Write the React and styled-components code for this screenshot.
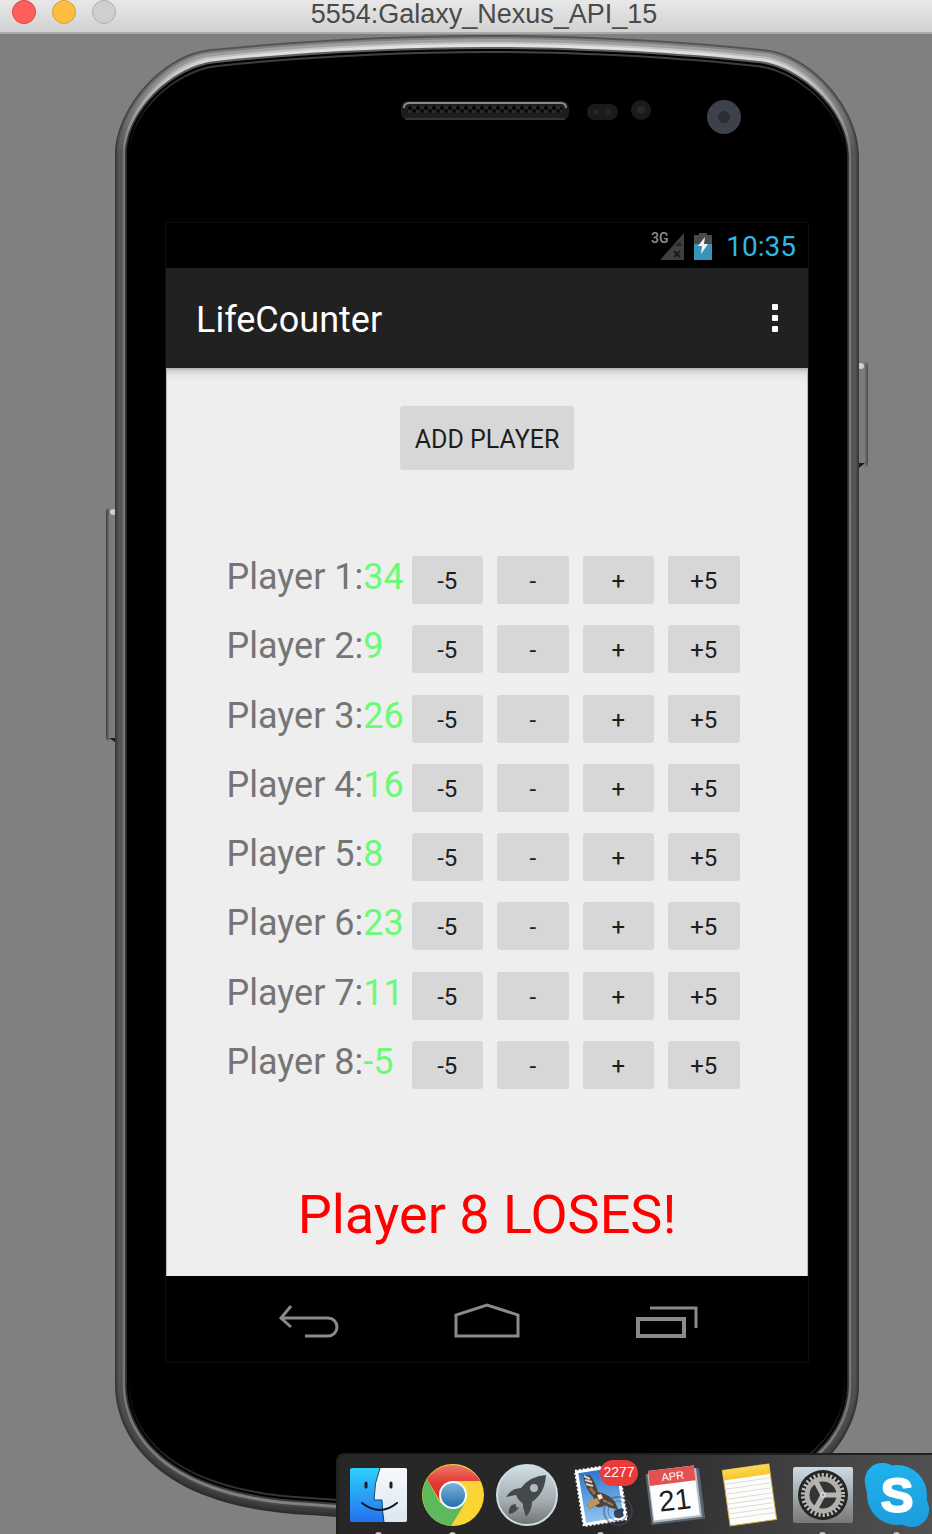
import React, { useState } from 'react';
import styled, { createGlobalStyle } from 'styled-components';

const GlobalStyle = createGlobalStyle`
  *, *::before, *::after { box-sizing: border-box; }
  body { margin: 0; background: #808080; font-family: Roboto, "Liberation Sans", sans-serif; }
  button { font-family: inherit; border: 0; padding: 0; cursor: pointer; }
`;

const Page = styled.div`
  position: relative;
  min-height: 100vh;
  overflow: hidden;
  background: #808080;
`;

const TitleBar = styled.header`
  display: flex;
  align-items: flex-start;
  height: 34px;
  padding: 0 0 0 12px;
  background: linear-gradient(#e8e8e8, #d2d2d2);
  border-bottom: 2px solid #aaaaaa;
`;

const Lights = styled.div`
  display: flex;
  gap: 16px;
`;

const Light = styled.button`
  width: 24px;
  height: 24px;
  border-radius: 50%;
  background: ${(p) => p.$fill};
  border: 1px solid ${(p) => p.$edge};
`;

const WindowTitle = styled.h1`
  flex: 1;
  margin: 0;
  padding-right: 80px;
  text-align: center;
  font: 400 27px/28px "Liberation Sans", Arial, sans-serif;
  color: #4a4a4a;
  white-space: nowrap;
`;

const Stage = styled.main`
  display: flex;
  justify-content: center;
  padding-left: 42px;
`;

const Phone = styled.section`
  position: relative;
  flex: none;
  width: 762px;
  padding: 189px 60px 158px;
`;

const PhoneShell = styled.svg`
  position: absolute;
  top: 0;
  left: 0;
  width: 762px;
  height: 1490px;
`;

const Screen = styled.div`
  position: relative;
  display: flex;
  flex-direction: column;
  outline: 1px solid #0c0c0c;
  background: #000;
`;

const StatusBar = styled.div`
  display: flex;
  align-items: center;
  justify-content: flex-end;
  gap: 9px;
  height: 45px;
  padding-right: 12px;
`;

const Clock = styled.time`
  margin-left: 4px;
  padding-top: 2px;
  font-size: 28px;
  line-height: 32px;
  color: #33b5e5;
`;

const AppBar = styled.div`
  display: flex;
  align-items: center;
  justify-content: space-between;
  height: 100px;
  padding: 0 20px 0 30px;
  background: #212121;
`;

const AppTitle = styled.h2`
  margin: 0;
  padding-top: 4px;
  font-size: 36px;
  line-height: 44px;
  font-weight: 400;
  color: #fff;
`;

const MenuButton = styled.button`
  display: flex;
  flex-direction: column;
  align-items: center;
  gap: 5px;
  width: 26px;
  background: none;
`;

const MenuDot = styled.span`
  width: 6px;
  height: 6px;
  border-radius: 1px;
  background: #fff;
`;

const Content = styled.div`
  display: flex;
  flex-direction: column;
  align-items: center;
  padding: 38px 0 27px;
  background: linear-gradient(#b0aeb0, #d6d4d7 3px, #e6e4e7 7px, #eeeeee 14px);
  border: solid #b8b6b6;
  border-width: 0 1px;
`;

const GreyButton = styled.button`
  height: ${(p) => (p.$large ? 64 : 48)}px;
  padding: ${(p) => (p.$large ? '4px 15px 0' : '2px 0 0')};
  border-radius: 3px;
  background: #d7d7d7;
  color: #1c1e1d;
  font-size: ${(p) => (p.$large ? 25 : 24)}px;
  line-height: 30px;
`;

const PlayerList = styled.ul`
  display: flex;
  flex-direction: column;
  justify-content: space-between;
  width: 521px;
  height: 533px;
  margin: 86px 0 0;
  padding: 0 8px 0 0;
  list-style: none;
`;

const PlayerRow = styled.li`
  display: grid;
  grid-template-columns: 185px 1fr;
  height: 48px;
`;

const PlayerName = styled.div`
  font-size: 36px;
  line-height: 43px;
  color: #757575;
  white-space: nowrap;
`;

const Life = styled.span`
  color: #69fb76;
`;

const Steps = styled.div`
  display: grid;
  grid-template-columns: repeat(4, 1fr);
  gap: 14px;
`;

const Verdict = styled.p`
  margin: 92px 0 0;
  font-size: 54px;
  line-height: 68px;
  color: #ff0000;
`;

const NavBar = styled.nav`
  display: flex;
  align-items: center;
  justify-content: center;
  gap: 60px;
  height: 86px;
`;

const NavButton = styled.button`
  display: flex;
  justify-content: center;
  width: 119px;
  background: none;
`;

const Dock = styled.footer`
  position: absolute;
  right: 0;
  bottom: 0;
  display: flex;
  gap: 10px;
  width: 596px;
  height: 81px;
  padding: 8px 0 0 8px;
  overflow: hidden;
  background: linear-gradient(100deg, #272727 45%, #404040 75%, #525252);
  border: solid #1f1f1f;
  border-width: 2px 0 0 2px;
  border-radius: 8px 0 0 0;
`;

const DockItem = styled.button`
  display: flex;
  flex-direction: column;
  align-items: center;
  justify-content: flex-start;
  flex: none;
  gap: 5px;
  width: 64px;
  background: none;

  svg { display: block; flex: none; overflow: visible; }
`;

const RunningDot = styled.span`
  flex: none;
  width: 7px;
  height: 7px;
  border-radius: 50%;
  background: #c4c4c4;
`;

/* Outline of the handset, pulled inwards by i pixels. */
function outline(i) {
  const s = i * 0.85;
  const l = 115 + s;
  const r = 859 - s;
  return `M${l} 155 C${l} 108 ${164 + i} ${52 + i} ${212 + i / 3} ${49 + i}
    C300 ${40 + i} 400 ${35 + i} 487 ${35 + i}
    C574 ${35 + i} 674 ${40 + i} ${762 - i / 3} ${49 + i}
    C${810 - i} ${52 + i} ${r} 108 ${r} 155 V1385
    C${r} 1430 ${824 - i} ${1508 - i} 664 ${1515 - i}
    C600 ${1520 - i} 540 ${1521 - i} 487 ${1521 - i}
    C434 ${1521 - i} 374 ${1520 - i} 310 ${1515 - i}
    C${150 + i} ${1508 - i} ${l} 1430 ${l} 1385 Z`;
}

const RIM = [
  [0, '#555555', '#3a3a3a', '#2c2c2c'],
  [2, '#808080', '#4b4b4b', '#343434'],
  [4, '#a0a0a0', '#565656', '#3b3b3b'],
  [7, '#c4c4c4', '#505050', '#484848'],
  [9, '#e2e2e2', '#747474', '#808080'],
  [12, '#606060', '#2a2a2a', '#3a3a3a'],
  [14, '#000000', '#000000', '#000000'],
  [16, '#444444', '#000000', '#343434'],
  [18, '#000000', '#000000', '#000000'],
];

function Handset() {
  return (
    <PhoneShell viewBox="106 34 762 1490" aria-hidden="true">
      <defs>
        {RIM.map(([i, top, mid, low]) => (
          <linearGradient key={i} id={`rim${i}`} gradientUnits="userSpaceOnUse" x1="0" y1="35" x2="0" y2="1521">
            <stop offset="0.01" stopColor={top} />
            <stop offset="0.08" stopColor={mid} />
            <stop offset="0.9" stopColor={mid} />
            <stop offset="0.98" stopColor={low} />
          </linearGradient>
        ))}
        <pattern id="mesh" width="8" height="7" patternUnits="userSpaceOnUse" x="408" y="106">
          <rect width="8" height="7" fill="#2b2b2b" />
          <circle cx="2" cy="2" r="2" fill="#000" />
          <circle cx="6" cy="5" r="2" fill="#050505" />
        </pattern>
        <linearGradient id="sideKey" x1="0" x2="1">
          <stop offset="0" stopColor="#3c3c3c" />
          <stop offset="0.3" stopColor="#7c7c7c" />
          <stop offset="0.7" stopColor="#7c7c7c" />
          <stop offset="1" stopColor="#4a4a4a" />
        </linearGradient>
      </defs>
      <rect x="106" y="508" width="12" height="233" rx="4" fill="url(#sideKey)" />
      <circle cx="113" cy="512" r="3" fill="#cfcfcf" />
      <path d="M109 738 l6 4 v-4z" fill="#1c1c1c" />
      <rect x="856" y="362" width="12" height="105" rx="4" fill="url(#sideKey)" />
      <circle cx="861" cy="366" r="3" fill="#cfcfcf" />
      <path d="M859 463 h6 l-6 5z" fill="#1c1c1c" />
      {RIM.map(([i]) => (
        <path key={i} d={outline(i)} fill={`url(#rim${i})`} />
      ))}
      <rect x="401" y="101" width="168" height="19" rx="7" fill="#1d1d1d" />
      <rect x="407" y="106" width="155" height="7" rx="3" fill="url(#mesh)" />
      <path d="M404 108 q0 -5 5 -5 h152 q5 0 5 5" fill="none" stroke="#8a8a8a" strokeWidth="2" />
      <path d="M405 119 h160" stroke="#4c4c4c" strokeWidth="1" />
      <rect x="587" y="104" width="31" height="16" rx="8" fill="#1b1b1b" />
      <circle cx="596" cy="112" r="3" fill="#262626" />
      <circle cx="609" cy="112" r="3" fill="#262626" />
      <circle cx="641" cy="110" r="10" fill="#1b1b1b" />
      <circle cx="641" cy="110" r="4" fill="#272727" />
      <circle cx="724" cy="117" r="17" fill="#3d4149" />
      <circle cx="724" cy="117" r="6" fill="#2a2d33" />
    </PhoneShell>
  );
}

function SignalIcon() {
  return (
    <svg width="35" height="30" viewBox="0 0 35 30" role="img" aria-label="3G signal">
      <path d="M35 2 V29 H11 Z" fill="#3f3f3f" />
      <path d="M26 15 l5 -4 l2 4 z" fill="#232323" />
      <path d="M25 20 l6 6 M31 20 l-6 6" stroke="#1c1c1c" strokeWidth="2" />
      <text x="2" y="12" fontFamily="Roboto, sans-serif" fontWeight="500" fontSize="14" fill="#8e8e8e">3G</text>
    </svg>
  );
}

function BatteryIcon() {
  return (
    <svg width="20" height="30" viewBox="0 0 20 30" role="img" aria-label="Battery charging">
      <path d="M6 2 h8 v2 h5 v9 H1 V4 h5z" fill="#4a4a4a" />
      <rect x="1" y="13" width="18" height="16" fill="#3994b9" />
      <path d="M12 6 l-7 9 h4 l-1 8 l7 -10 h-4z" fill="#f2f2f2" />
    </svg>
  );
}

function BackIcon() {
  return (
    <svg width="68" height="40" viewBox="0 0 68 40" fill="none" stroke="#8a8a8a" strokeWidth="3">
      <path d="M17 7 L7 19 L17 28 M7 19 H54 a9 9 0 0 1 0 18 H31" />
    </svg>
  );
}

function HomeIcon() {
  return (
    <svg width="68" height="40" viewBox="0 0 68 40" fill="none" stroke="#8a8a8a" strokeWidth="3">
      <path d="M3 37 V16 L34 6 L65 16 V37 Z" />
    </svg>
  );
}

function RecentIcon() {
  return (
    <svg width="68" height="40" viewBox="0 0 68 40" fill="none" stroke="#8a8a8a" strokeWidth="3">
      <rect x="6" y="20" width="46" height="17" strokeWidth="4" />
      <path d="M18 9 H64 V29" />
    </svg>
  );
}

function Finder() {
  return (
    <svg width="64" height="64" viewBox="0 0 64 64">
      <defs>
        <linearGradient id="finderBlue" x1="0" y1="0" x2="0" y2="1">
          <stop offset="0" stopColor="#2fd0fb" />
          <stop offset="1" stopColor="#2471ef" />
        </linearGradient>
        <linearGradient id="finderWhite" x1="0" y1="0" x2="0" y2="1">
          <stop offset="0" stopColor="#f8f8fa" />
          <stop offset="1" stopColor="#dbe7f2" />
        </linearGradient>
      </defs>
      <rect x="4" y="5" width="57" height="54" rx="2" fill="url(#finderBlue)" />
      <path d="M34 5 H59 q2 0 2 2 V57 q0 2 -2 2 H38 Q37 48 36 37 H28 Q28 20 34 5z" fill="url(#finderWhite)" />
      <path d="M34 5 Q28 20 28 37 H36 Q36 48 38 59" fill="none" stroke="#16426e" strokeWidth="1" />
      <path d="M20 20 v4 M45 20 v4" stroke="#17202b" strokeWidth="3" strokeLinecap="round" />
      <path d="M16 40 Q34 54 51 40" fill="none" stroke="#10151d" strokeWidth="2" strokeLinecap="round" />
    </svg>
  );
}

function Chrome() {
  return (
    <svg width="64" height="64" viewBox="0 0 64 64">
      <defs>
        <linearGradient id="chromeBlue" x1="0" y1="0" x2="0" y2="1">
          <stop offset="0" stopColor="#7db4dc" />
          <stop offset="1" stopColor="#2370b0" />
        </linearGradient>
        <linearGradient id="chromeRed" x1="0" y1="0" x2="0" y2="1">
          <stop offset="0" stopColor="#ee7566" />
          <stop offset="0.5" stopColor="#e03a34" />
          <stop offset="1" stopColor="#d32f2d" />
        </linearGradient>
      </defs>
      <circle cx="33" cy="32" r="31" fill="#fbd534" />
      <path d="M7 16 L20 40 L45 40 L31 63 A31 31 0 0 1 7 16z" fill="#5dba5c" />
      <path d="M7 16 A31 31 0 0 1 60 18 H33 L20 38z" fill="url(#chromeRed)" />
      <circle cx="33" cy="32" r="14" fill="#f5f8fa" />
      <circle cx="33" cy="32" r="12" fill="url(#chromeBlue)" />
    </svg>
  );
}

function Launchpad() {
  return (
    <svg width="64" height="64" viewBox="0 0 64 64">
      <defs>
        <linearGradient id="launchSteel" x1="0" y1="0" x2="0" y2="1">
          <stop offset="0" stopColor="#cfe0e6" />
          <stop offset="0.6" stopColor="#a3adb1" />
          <stop offset="1" stopColor="#707172" />
        </linearGradient>
      </defs>
      <circle cx="33" cy="32" r="30" fill="url(#launchSteel)" stroke="#cddce3" strokeWidth="2" />
      <path d="M52 12 Q36 13 27 25 Q18 25 12 34 L22 32 L24 36 L29 41 L29 44 L32 54 Q38 47 38 39 Q51 30 52 12z" fill="#45494c" />
      <path d="M22 41 Q14 41 15 51 Q22 50 25 44 Q21 46 22 41z" fill="#45494c" />
      <circle cx="40" cy="25" r="4" fill="#aebdc4" />
    </svg>
  );
}

function Mail() {
  return (
    <svg width="64" height="64" viewBox="0 0 64 64">
      <defs>
        <linearGradient id="mailSky" x1="0" y1="0" x2="0" y2="1">
          <stop offset="0" stopColor="#2f78cb" />
          <stop offset="1" stopColor="#8cc4ee" />
        </linearGradient>
      </defs>
      <g transform="rotate(-9 33 32)">
        <rect x="11" y="4" width="44" height="56" fill="#fff" stroke="#fff" strokeWidth="2" strokeDasharray="2 2" />
        <rect x="14" y="7" width="38" height="50" fill="url(#mailSky)" />
      </g>
      <path d="M15 12 L22 12 Q28 20 30 29 Q41 31 47 39 L50 46 Q43 46 37 42 Q32 46 27 43 L22 46 L19 42 L26 35 Q17 26 15 12z" fill="#54422f" />
      <path d="M16 13 l6 3 M17 17 l7 2 M18 21 l7 2" stroke="#cfd0cf" strokeWidth="2" />
      <path d="M22 25 l5 6" stroke="#8d7355" strokeWidth="3" />
      <path d="M19 42 l3 -5 l7 -2 l3 5 l-5 3 l-5 3z" fill="#bb9461" />
      <path d="M29 32 l4 -1 l2 4 l-4 2z" fill="#efe9df" />
      <path d="M35 37 l10 5" stroke="#9a8062" strokeWidth="2" />
      <circle cx="50" cy="48" r="14" fill="none" stroke="#44506a" strokeWidth="2" opacity="0.5" />
      <circle cx="50" cy="48" r="10" fill="none" stroke="#44506a" strokeWidth="1" opacity="0.6" />
      <path d="M51 46 q4 -2 5 1 q-2 3 0 5 q-3 4 -5 3 q-3 1 -5 -3 q-1 -7 5 -6z" fill="#33425d" />
      <rect x="32" y="-3" width="38" height="26" rx="13" fill="#ec3a3a" />
      <text x="51" y="14" textAnchor="middle" fontFamily="Liberation Sans, sans-serif" fontSize="14" fill="#fff">2277</text>
    </svg>
  );
}

function Calendar() {
  return (
    <svg width="64" height="64" viewBox="0 0 64 64">
      <g transform="rotate(-7 32 31)">
        <rect x="6" y="8" width="54" height="51" fill="#566571" />
        <rect x="8" y="8" width="49" height="49" fill="#b8bcbf" />
        <rect x="9" y="5" width="46" height="50" fill="#fdfdfd" />
        <rect x="9" y="5" width="46" height="15" fill="#e35252" />
        <text x="33" y="17" textAnchor="middle" fontFamily="Liberation Sans, sans-serif" fontSize="11" fill="#fff">APR</text>
        <text x="32" y="47" textAnchor="middle" fontFamily="Liberation Sans, sans-serif" fontSize="29" fill="#1d1d1d">21</text>
      </g>
    </svg>
  );
}

function Notes() {
  return (
    <svg width="64" height="64" viewBox="0 0 64 64">
      <defs>
        <linearGradient id="notesTop" x1="0" y1="0" x2="0" y2="1">
          <stop offset="0" stopColor="#fbd955" />
          <stop offset="1" stopColor="#f8c62b" />
        </linearGradient>
      </defs>
      <g transform="rotate(-8 33 32)">
        <rect x="10" y="4" width="47" height="56" fill="#fdfdfb" stroke="#c9a63e" strokeWidth="1" />
        <path d="M10 18 H57 M10 23 H57 M10 28 H57 M10 33 H57 M10 38 H57 M10 43 H57 M10 48 H57 M10 53 H57" stroke="#dcdcda" strokeWidth="1" />
        <rect x="10" y="4" width="47" height="10" fill="url(#notesTop)" />
      </g>
    </svg>
  );
}

function Settings() {
  return (
    <svg width="64" height="64" viewBox="0 0 64 64">
      <defs>
        <linearGradient id="prefsPlate" x1="0" y1="0" x2="0" y2="1">
          <stop offset="0" stopColor="#cbdce4" />
          <stop offset="0.6" stopColor="#9a9fa2" />
          <stop offset="1" stopColor="#777777" />
        </linearGradient>
      </defs>
      <rect x="3" y="4" width="60" height="56" rx="2" fill="url(#prefsPlate)" />
      <circle cx="33" cy="32" r="25" fill="#242526" />
      <circle cx="33" cy="32" r="20" fill="none" stroke="#c0bdb8" strokeWidth="4" strokeDasharray="2.1 2.1" />
      <circle cx="33" cy="32" r="16" fill="#333435" stroke="#b3b0ab" strokeWidth="5" />
      <g stroke="#b9b6b1" strokeWidth="5">
        <path d="M33 32 H50" />
        <path d="M33 32 L25 17" />
        <path d="M33 32 L25 47" />
      </g>
      <circle cx="33" cy="32" r="3" fill="#d5d3cf" />
      <circle cx="33" cy="32" r="1" fill="#808080" />
    </svg>
  );
}

function Skype() {
  return (
    <svg width="64" height="64" viewBox="0 0 64 64">
      <defs>
        <linearGradient id="skypeBlue" gradientUnits="userSpaceOnUse" x1="0" y1="0" x2="0" y2="64">
          <stop offset="0" stopColor="#1fb2ee" />
          <stop offset="1" stopColor="#1c9ddb" />
        </linearGradient>
      </defs>
      <g fill="url(#skypeBlue)">
        <circle cx="33" cy="32" r="30" />
        <circle cx="18" cy="17" r="17" />
        <circle cx="48" cy="47" r="17" />
        <path d="M18 0 Q24 0 29 3 L3 30 Q0 20 1 14z M48 64 Q42 64 37 61 L62 34 Q65 43 65 49z" />
      </g>
      <text x="33" y="49" textAnchor="middle" fontFamily="Liberation Sans, sans-serif" fontWeight="700" fontSize="49" fill="#fff" stroke="#fff" strokeWidth="2" strokeLinejoin="round">S</text>
    </svg>
  );
}

const APPS = [
  ['Finder', Finder, true],
  ['Chrome', Chrome, true],
  ['Launchpad', Launchpad, false],
  ['Mail', Mail, true],
  ['Calendar', Calendar, false],
  ['Notes', Notes, false],
  ['System Preferences', Settings, true],
  ['Skype', Skype, true],
];

const STEPS = [
  ['-5', -5],
  ['-', -1],
  ['+', 1],
  ['+5', 5],
];

export default function App() {
  const [lives, setLives] = useState([34, 9, 26, 16, 8, 23, 11, -5]);
  const loser = lives.findIndex((life) => life <= 0);
  const change = (index, by) =>
    setLives((all) => all.map((life, i) => (i === index ? life + by : life)));

  return (
    <Page>
      <GlobalStyle />
      <TitleBar>
        <Lights>
          <Light aria-label="Close" $fill="#fd605c" $edge="#e0443f" />
          <Light aria-label="Minimize" $fill="#fdbd40" $edge="#dd9f30" />
          <Light aria-label="Zoom" $fill="#cfcfcf" $edge="#b0b0b0" />
        </Lights>
        <WindowTitle>5554:Galaxy_Nexus_API_15</WindowTitle>
      </TitleBar>
      <Stage>
        <Phone>
          <Handset />
          <Screen>
            <StatusBar>
              <SignalIcon />
              <BatteryIcon />
              <Clock>10:35</Clock>
            </StatusBar>
            <AppBar>
              <AppTitle>LifeCounter</AppTitle>
              <MenuButton aria-label="More options">
                <MenuDot />
                <MenuDot />
                <MenuDot />
              </MenuButton>
            </AppBar>
            <Content>
              <GreyButton $large onClick={() => setLives((all) => [...all, 20])}>ADD PLAYER</GreyButton>
              <PlayerList>
                {lives.map((life, i) => (
                  <PlayerRow key={i}>
                    <PlayerName>
                      Player {i + 1}:<Life>{life}</Life>
                    </PlayerName>
                    <Steps>
                      {STEPS.map(([label, by]) => (
                        <GreyButton key={label} onClick={() => change(i, by)}>{label}</GreyButton>
                      ))}
                    </Steps>
                  </PlayerRow>
                ))}
              </PlayerList>
              <Verdict>{loser >= 0 ? `Player ${loser + 1} LOSES!` : '\u00a0'}</Verdict>
            </Content>
            <NavBar>
              <NavButton aria-label="Back"><BackIcon /></NavButton>
              <NavButton aria-label="Home"><HomeIcon /></NavButton>
              <NavButton aria-label="Recent apps"><RecentIcon /></NavButton>
            </NavBar>
          </Screen>
        </Phone>
      </Stage>
      <Dock>
        {APPS.map(([name, Icon, running]) => (
          <DockItem key={name} aria-label={name}>
            <Icon />
            {running && <RunningDot />}
          </DockItem>
        ))}
      </Dock>
    </Page>
  );
}
